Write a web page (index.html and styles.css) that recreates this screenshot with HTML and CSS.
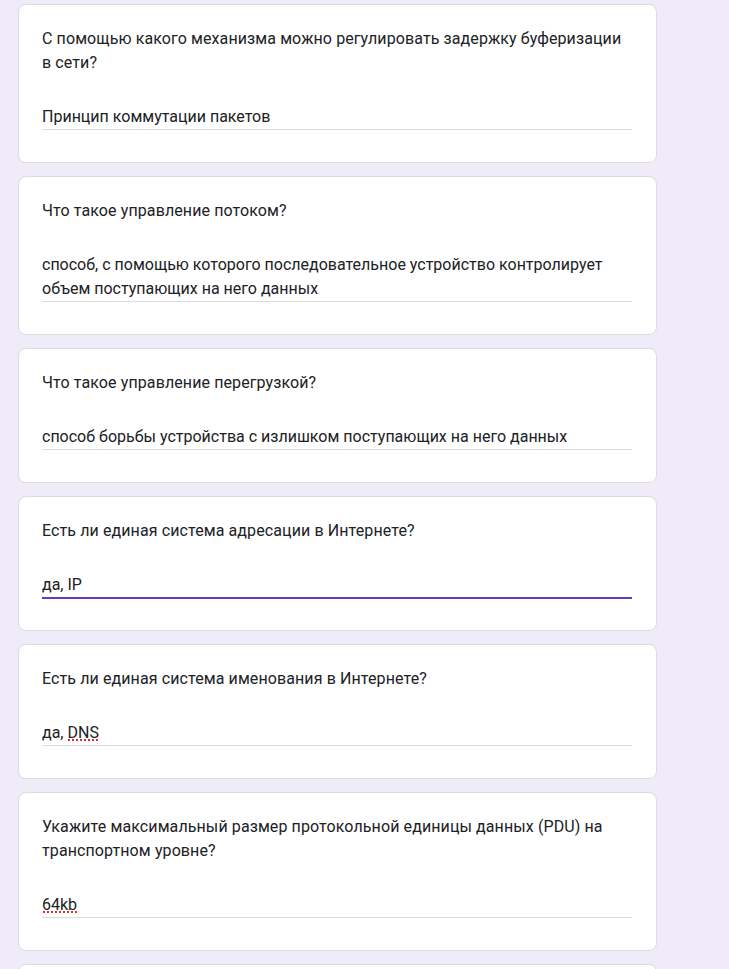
FILE: index.html
```html
<!DOCTYPE html>
<html lang="ru">
<head>
<meta charset="utf-8">
<title>Форма</title>
<link rel="stylesheet" href="styles.css">
</head>
<body>
<main class="list">
  <section class="card">
    <div class="question">С помощью какого механизма можно регулировать задержку буферизации в сети?</div>
    <div class="answer">Принцип коммутации пакетов</div>
  </section>
  <section class="card">
    <div class="question">Что такое управление потоком?</div>
    <div class="answer">способ, с помощью которого последовательное устройство контролирует объем поступающих на него данных</div>
  </section>
  <section class="card">
    <div class="question">Что такое управление перегрузкой?</div>
    <div class="answer">способ борьбы устройства с излишком поступающих на него данных</div>
  </section>
  <section class="card">
    <div class="question">Есть ли единая система адресации в Интернете?</div>
    <div class="answer focused">да, IP</div>
  </section>
  <section class="card">
    <div class="question">Есть ли единая система именования в Интернете?</div>
    <div class="answer">да, <span class="misspelled">DNS</span></div>
  </section>
  <section class="card">
    <div class="question">Укажите максимальный размер протокольной единицы данных (PDU) на транспортном уровне?</div>
    <div class="answer"><span class="misspelled">64kb</span></div>
  </section>
  <section class="card">
    <div class="question">&nbsp;</div>
    <div class="answer">&nbsp;</div>
  </section>
</main>
</body>
</html>
```

FILE: styles.css
```css
html, body {
  margin: 0;
  padding: 0;
  background: #f0ebf8;
}
body {
  font-family: Roboto, "Noto Sans", sans-serif;
  color: #202124;
  height: 969px;
  overflow: hidden;
}
.list {
  width: 639px;
  margin-left: 18px;
  padding-top: 4px;
  display: flex;
  flex-direction: column;
  gap: 13px;
}
.card {
  box-sizing: border-box;
  background: #fff;
  border: 1px solid #dadce0;
  border-radius: 8px;
  padding: 22px 24px 32px 23px;
}
.question {
  font-size: 16px;
  line-height: 24px;
  letter-spacing: 0.1px;
  font-weight: 400;
}
.answer {
  margin-top: 30px;
  font-size: 16px;
  line-height: 24px;
  border-bottom: 1px solid #dadce0;
}
.answer.focused {
  border-bottom: 2px solid #673ab7;
  margin-bottom: -1px;
}
.misspelled {
  background-image:
    linear-gradient(45deg, transparent 35%, #d93025 35%, #d93025 65%, transparent 65%),
    linear-gradient(-45deg, transparent 35%, #d93025 35%, #d93025 65%, transparent 65%);
  background-size: 4px 2px;
  background-repeat: repeat-x;
  background-position: 0 calc(100% - 1px);
}
```
